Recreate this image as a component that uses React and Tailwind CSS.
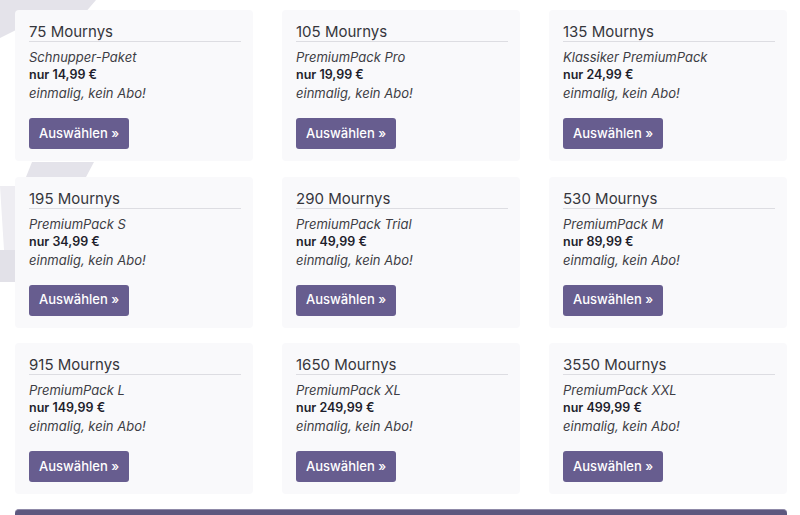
import React from 'react';

const packs = [
  { amount: '75', name: 'Schnupper-Paket', price: '14,99' },
  { amount: '105', name: 'PremiumPack Pro', price: '19,99' },
  { amount: '135', name: 'Klassiker PremiumPack', price: '24,99' },
  { amount: '195', name: 'PremiumPack S', price: '34,99' },
  { amount: '290', name: 'PremiumPack Trial', price: '49,99' },
  { amount: '530', name: 'PremiumPack M', price: '89,99' },
  { amount: '915', name: 'PremiumPack L', price: '149,99' },
  { amount: '1650', name: 'PremiumPack XL', price: '249,99' },
  { amount: '3550', name: 'PremiumPack XXL', price: '499,99' },
];

function Backdrop() {
  // faint decorative logo shape behind the left column
  return (
    <svg className="absolute left-0 top-0 pointer-events-none" width="120" height="340" viewBox="0 0 120 340">
      <polygon points="0,0 96,0 84,14 16,14 16,30 0,38" fill="#e4e3ea" />
      <polygon points="32,162 94,162 86,177 26,177" fill="#e4e3ea" />
      <polygon points="0,186 16,186 16,250 4,250" fill="#eeedf2" />
      <polygon points="0,250 16,250 16,282 0,282" fill="#e2e1e8" />
    </svg>
  );
}

function PackCard({ amount, name, price }) {
  return (
    <div className="bg-[#f9f9fb] rounded-[4px] px-[14px] pt-[14px] pb-[12px] h-[151px]">
      <div className="text-[15px] leading-[16px] text-[#36363c] border-b border-[#dddde2] pb-px mr-[-2px]">
        {amount} Mournys
      </div>
      <div className="mt-[6px] text-[13px] leading-[18px] italic text-[#3d3d44]">{name}</div>
      <div className="text-[12.5px] leading-[18px] font-semibold text-[#1e1e2c]">nur {price} €</div>
      <div className="text-[13px] leading-[18px] italic text-[#3d3d44]">einmalig, kein Abo!</div>
      <button className="mt-[16px] h-[31px] px-[10px] rounded-[3px] bg-[#675d8f] text-white text-[13px] font-medium">
        Auswählen »
      </button>
    </div>
  );
}

export default function App() {
  return (
    <div className="relative w-[800px] h-[515px] overflow-hidden bg-white" style={{ fontFamily: 'Inter, "Noto Sans", sans-serif' }}>
      <Backdrop />
      <div className="relative pl-[15px] pt-[10px] pr-[13px]">
        <div className="grid grid-cols-[238px_238px_238px] gap-x-[29px] gap-y-[15.5px]">
          {packs.map((p) => (
            <PackCard key={p.amount} {...p} />
          ))}
        </div>
        <div className="mt-[15px] h-[10px] rounded-t-[4px] bg-[#5d587f] border-t border-[#8f8aa8]" />
      </div>
    </div>
  );
}
